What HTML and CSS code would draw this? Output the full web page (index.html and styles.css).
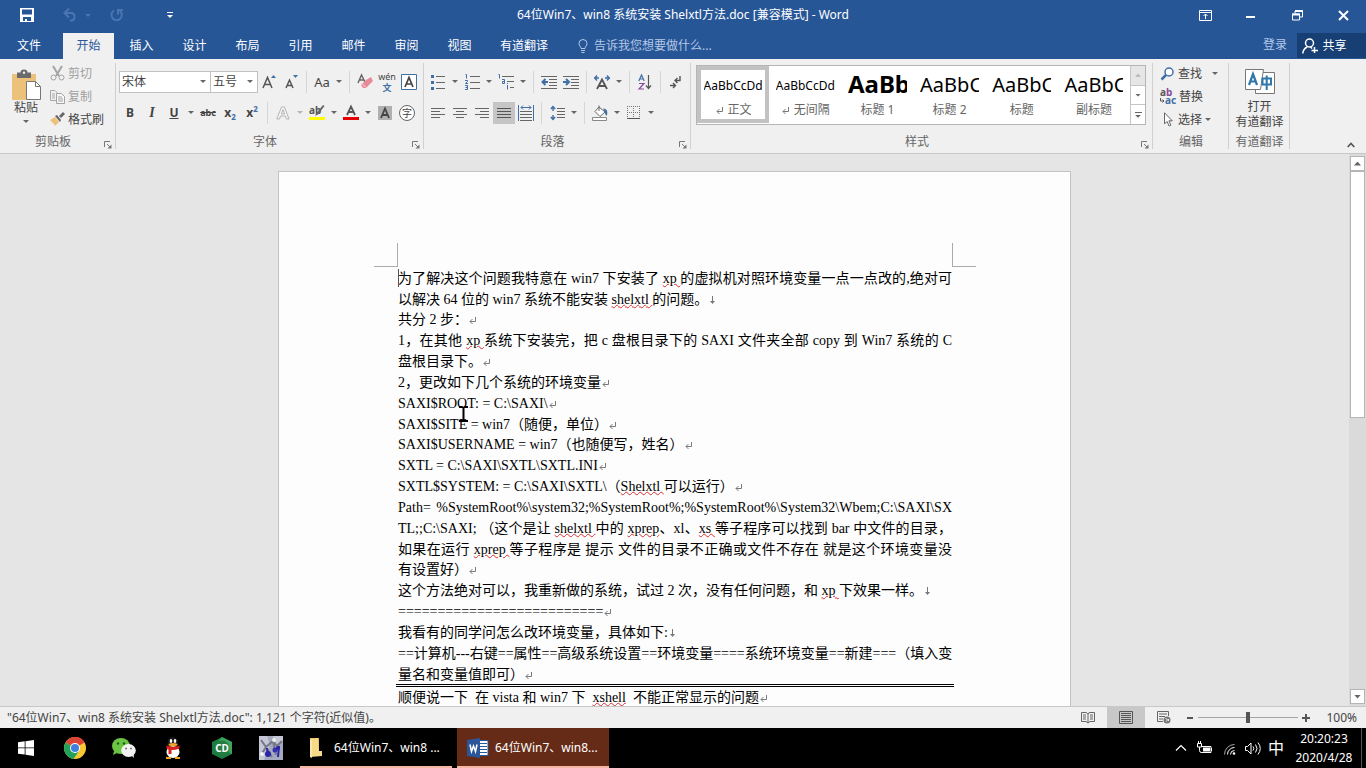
FILE: index.html
```html
<!DOCTYPE html>
<html lang="zh-CN">
<head>
<meta charset="utf-8">
<title>64位Win7、win8 系统安装 Shelxtl方法.doc [兼容模式] - Word</title>
<link rel="stylesheet" href="styles.css">
</head>
<body>
<svg class="defs" aria-hidden="true">
  <symbol id="enter" viewBox="0 0 9 14"><path d="M7.500 4v4.500H2M4.500 6l-2.500 2.500 2.500 2.500" fill="none" stroke="#7a7a7a"/></symbol>
  <symbol id="down" viewBox="0 0 9 14"><path d="M4.500 3v7" stroke="#777"/><path d="M2 8l2.500 3L7 8z" fill="#777"/></symbol>
  <symbol id="launch" viewBox="0 0 8 8"><path d="M.5 6V.500H6M3 3l3 3" fill="none" stroke="#777"/><path d="M7.500 3.500v4h-4z" fill="#777"/></symbol>
</svg>
<div class="app">
  <header class="titlebar">
    <div class="quick">
      <button class="qbtn" aria-label="保存"><svg width="14" height="14" viewBox="0 0 14 14"><path d="M0 0h14v14H0zM2 1.500v5h10v-5zM3 9v4h2v-2h2v2h4V9z" fill="#fff" fill-rule="evenodd"/></svg></button>
      <button class="qbtn dim" aria-label="撤消"><svg width="28" height="14" viewBox="0 0 28 14"><path d="M1.500 5h7.500a4 4 0 0 1 0 7.500H7M6 .500L1.500 5 6 9.500" fill="none" stroke="#4a74b4" stroke-width="2"/><path d="M22 6h6l-3 3z" fill="#4a74b4"/></svg></button>
      <button class="qbtn dim" aria-label="重复"><svg width="14" height="14" viewBox="0 0 14 14"><path d="M4 2.500a5.200 5.200 0 1 0 6 .500M8 6.500V2h5" fill="none" stroke="#4a74b4" stroke-width="2"/></svg></button>
      <button class="qbtn" aria-label="自定义"><svg width="6" height="8" viewBox="0 0 6 8"><path d="M0 4h6L3 7z" fill="#fff"/><path d="M0 1.500h6" stroke="#fff"/></svg></button>
    </div>
    <h1 class="title">64位Win7、win8 系统安装 Shelxtl方法.doc [兼容模式] - Word</h1>
    <div class="winbtns">
      <button aria-label="功能区显示选项"><svg width="13" height="11" viewBox="0 0 13 11"><path d="M.5.500h12v10H.5zM.5 2.500h12M6.500 9V4M4.500 6l2-2 2 2" fill="none" stroke="#fff"/></svg></button>
      <button aria-label="最小化"><svg width="10" height="11" viewBox="0 0 10 11"><path d="M0 7h9" stroke="#fff" stroke-width="2"/></svg></button>
      <button aria-label="还原"><svg width="11" height="11" viewBox="0 0 11 11"><path d="M.5 4h7v6h-7zM3 3.500V1h7.500v6H8" fill="none" stroke="#fff"/><path d="M0 4.500h8M3 1h8" stroke="#fff" stroke-width="2"/></svg></button>
      <button aria-label="关闭"><svg width="11" height="11" viewBox="0 0 11 11"><path d="M1 1l9 9M10 1l-9 9" stroke="#fff" stroke-width="2"/></svg></button>
    </div>
  </header>

  <nav class="tabs">
    <button class="tab file">文件</button>
    <button class="tab active">开始</button>
    <button class="tab">插入</button>
    <button class="tab">设计</button>
    <button class="tab">布局</button>
    <button class="tab">引用</button>
    <button class="tab">邮件</button>
    <button class="tab">审阅</button>
    <button class="tab">视图</button>
    <button class="tab wide">有道翻译</button>
    <label class="tell"><svg width="10" height="14" viewBox="0 0 10 14"><path d="M3 9.500C3 7.500 1 7 1 4.500a4 4 0 0 1 8 0C9 7 7 7.500 7 9.500zM3 11.500h4M3.500 13.500h3" fill="none" stroke="#b4c8e6"/></svg><input type="text" aria-label="告诉我" placeholder="告诉我您想要做什么..."></label>
    <button class="login">登录</button>
    <button class="share"><svg width="16" height="16" viewBox="0 0 16 16"><circle cx="7.500" cy="5" r="4" fill="none" stroke="#fff" stroke-width="1.500"/><path d="M.8 15.500c.3-3.500 2-5.500 4.500-6.500M8.500 9l1.500 1.500M12.500 9v6M9.500 12.500H16" fill="none" stroke="#fff" stroke-width="1.500"/></svg>共享</button>
  </nav>

  <div class="ribbon">
    <section class="group clip">
      <div class="body cols">
        <button class="big paste"><svg width="29" height="31" viewBox="0 0 29 31"><path d="M0 4h24v26H0z" fill="#ecc27a"/><path d="M5 2.500h3.500a3.500 3 0 0 1 7 0H19V8H5z" fill="#6b6b6b"/><circle cx="12" cy="2.800" r="1.200" fill="#eee"/><path d="M14.500 11.500h9l5 5v13h-14z" fill="#fff" stroke="#777"/><path d="M23.500 11.500v5h5" fill="none" stroke="#777"/></svg>粘贴<i class="caret"></i></button>
        <div class="stack">
          <button class="item off"><svg width="15" height="15" viewBox="0 0 15 15"><path d="M3 0l6 10M12 0L6 10" stroke="#a3a3a3" stroke-width="2"/><circle cx="3.500" cy="11.500" r="2.500" fill="none" stroke="#a3a3a3"/><circle cx="11.500" cy="11.500" r="2.500" fill="none" stroke="#a3a3a3"/></svg>剪切</button>
          <button class="item off"><svg width="15" height="15" viewBox="0 0 15 15"><path d="M6 11.500H.5V1.500H5l3 3M2 5h3M2 7h3M2 9h3" fill="none" stroke="#aaa"/><path d="M6.500 4.500h5l3 3v7h-8zM8 8h4M8 10h5M8 12h5" fill="#f8f8f8" stroke="#a3a3a3"/></svg>复制</button>
          <button class="item"><svg width="15" height="15" viewBox="0 0 15 15"><path d="M0 8l5-3 4 5-4 4c-1-3-3-3-5-6z" fill="#ecc27a"/><path d="M5 4l2-1 4 5-1 2zM9 4l4-4 2 2-4 4z" fill="#666"/></svg>格式刷</button>
        </div>
      </div>
      <footer class="cap"><span>剪贴板</span><button class="launch" aria-label="剪贴板设置"><svg width="8" height="8"><use href="#launch"/></svg></button></footer>
    </section>

    <section class="group font">
      <div class="body rows">
        <div class="row">
          <span class="combo name"><select aria-label="字体"><option>宋体</option></select><i class="caret"></i></span><span class="combo size"><select aria-label="字号"><option>五号</option></select><i class="caret"></i></span>
          <button class="ib" aria-label="增大字号"><svg width="14" height="16" viewBox="0 0 14 16"><path d="M1 14L5.500 3.500 10 14M2.500 10.500h6" fill="none" stroke="#555" stroke-width="1.500"/><path d="M9 4l2.500-3L14 4z" fill="#3f6fa5"/></svg></button>
          <button class="ib" aria-label="减小字号"><svg width="14" height="16" viewBox="0 0 14 16"><path d="M2 14L5.500 6 9 14M3 11.500h5" fill="none" stroke="#555" stroke-width="1.500"/><path d="M9 1h5l-2.500 3z" fill="#3f6fa5"/></svg></button>
          <i class="sep"></i>
          <button class="ib aa">Aa</button><button class="dd" aria-label="更改大小写选项"><i class="caret"></i></button>
          <i class="sep"></i>
          <button class="ib" aria-label="清除格式"><svg width="16" height="16" viewBox="0 0 16 16"><path d="M1 9L4.500 1 8 8M2 6h5" fill="none" stroke="#666" stroke-width="1.400"/><path d="M9 6l5-3 2 4-7 7H6l-2-3z" fill="#e8899a"/><path d="M5 9.500l4 4" stroke="#fbdce1"/></svg></button>
          <button class="ib wen"><span>wén</span><b>文</b></button>
          <button class="ib" aria-label="字符边框"><svg width="16" height="16" viewBox="0 0 16 16"><path d="M.5.500h15v15H.5z" fill="#fff" stroke="#3f6fa5"/><path d="M4 13L8 3.500 12 13M5.500 10h5" fill="none" stroke="#444" stroke-width="1.700"/></svg></button>
        </div>
        <div class="row">
          <button class="ib bold">B</button><button class="ib ital">I</button><button class="ib under">U</button><button class="dd" aria-label="下划线选项"><i class="caret"></i></button>
          <button class="ib strike">abc</button>
          <button class="ib bold">x<sub>2</sub></button><button class="ib bold">x<sup>2</sup></button>
          <i class="sep"></i>
          <button class="ib" aria-label="文本效果"><svg width="14" height="14" viewBox="0 0 14 14"><path d="M.8 13L5.500 1h3L13 13h-2.500l-1-3h-5l-1 3zM5.300 8h3.400L7 3.500z" fill="#f6f6f6" stroke="#b5b5b5"/></svg></button><button class="dd off" aria-label="文本效果选项"><i class="caret"></i></button>
          <button class="ib" aria-label="突出显示"><svg width="16" height="16" viewBox="0 0 16 16"><text x="0" y="9" font-size="10" font-weight="700" fill="#555">ab</text><path d="M15.500 1L9 9.500l-3 1.500 1.500-3L14 0z" fill="#666"/><path d="M0 12h16v3H0z" fill="#ff0"/></svg></button><button class="dd" aria-label="突出显示选项"><i class="caret"></i></button>
          <button class="ib" aria-label="字体颜色"><svg width="16" height="16" viewBox="0 0 16 16"><path d="M4 10L8 1.500 12 10M5.500 7h5" fill="none" stroke="#555" stroke-width="1.800"/><path d="M0 12h16v3H0z" fill="#e60000"/></svg></button><button class="dd" aria-label="字体颜色选项"><i class="caret"></i></button>
          <button class="ib" aria-label="字符底纹"><svg width="14" height="14" viewBox="0 0 14 14"><path d="M0 0h14v14H0z" fill="#b0b0b0"/><path d="M3 12L7 2.500 11 12M4.500 9h5" fill="none" stroke="#444" stroke-width="1.800"/></svg></button>
          <button class="ib"><span class="ring">字</span></button>
        </div>
      </div>
      <footer class="cap"><span>字体</span><button class="launch" aria-label="字体设置"><svg width="8" height="8"><use href="#launch"/></svg></button></footer>
    </section>

    <section class="group para">
      <div class="body rows">
        <div class="row">
          <button class="ib" aria-label="项目符号"><svg width="14" height="16" viewBox="0 0 14 16"><path d="M0 1h3v3H0zM0 7h3v3H0zM0 13h3v3H0z" fill="#3f6fa5"/><path d="M5 2.500h9M5 8.500h9M5 14.500h9" stroke="#666"/></svg></button><button class="dd" aria-label="项目符号选项"><i class="caret"></i></button>
          <button class="ib" aria-label="编号"><svg width="15" height="16" viewBox="0 0 15 16"><path d="M.5.500h1v4M0 6.500h2.500v1L.5 9.500H3M0 11.500h2.500v4H0M.5 13.500h2" fill="none" stroke="#3f6fa5"/><path d="M5 2.500h10M5 8.500h10M5 14.500h10" stroke="#666"/></svg></button><button class="dd" aria-label="编号选项"><i class="caret"></i></button>
          <button class="ib" aria-label="多级列表"><svg width="16" height="16" viewBox="0 0 16 16"><path d="M.5.500h1v4M4 5.500h2.500v4H4.500v-2h2M9.500 11v4.500M9.500 9v1" fill="none" stroke="#3f6fa5"/><path d="M4 2.500h12M9 7.500h7M12 13.500h4" stroke="#666"/></svg></button><button class="dd" aria-label="多级列表选项"><i class="caret"></i></button>
          <i class="sep"></i>
          <button class="ib" aria-label="减少缩进量"><svg width="16" height="14" viewBox="0 0 16 14"><path d="M0 1.500h16M8 4.500h8M8 7.500h8M8 10.500h8M0 13.500h16" stroke="#666"/><path d="M7 7H2M4.500 4L1.500 7l3 3" fill="none" stroke="#3f6fa5" stroke-width="2"/></svg></button>
          <button class="ib" aria-label="增加缩进量"><svg width="16" height="14" viewBox="0 0 16 14"><path d="M0 1.500h16M8 4.500h8M8 7.500h8M8 10.500h8M0 13.500h16" stroke="#666"/><path d="M0 7h5M3 4l3 3-3 3" fill="none" stroke="#3f6fa5" stroke-width="2"/></svg></button>
          <i class="sep"></i>
          <button class="ib" aria-label="中文版式"><svg width="16" height="14" viewBox="0 0 16 14"><path d="M3 14L8 4.500 13 14M5 11h6" fill="none" stroke="#555" stroke-width="1.800"/><path d="M0 3h5M11 3h5M3 .500L.8 3 3 5.500M13 .500L15.200 3 13 5.500" fill="none" stroke="#3f6fa5" stroke-width="1.500"/></svg></button><button class="dd" aria-label="中文版式选项"><i class="caret"></i></button>
          <i class="sep"></i>
          <button class="ib" aria-label="排序"><svg width="14" height="16" viewBox="0 0 14 16"><path d="M.8 7L3.500 1 6.200 7M1.500 5h4" fill="none" stroke="#3f6fa5" stroke-width="1.200"/><path d="M1 9.500h5l-5 5.500h5" fill="none" stroke="#8a4b9c" stroke-width="1.200"/><path d="M10.500 1v13M8 11.500l2.500 3 2.500-3" fill="none" stroke="#555" stroke-width="1.200"/></svg></button>
          <i class="sep"></i>
          <button class="ib" aria-label="显示编辑标记"><svg width="12" height="14" viewBox="0 0 12 14"><path d="M10 1v4.500H5M7.500 3L5 5.500 7.500 8M0 10.500h5M3 8l2.500 2.500L3 13" fill="none" stroke="#555" stroke-width="1.400"/></svg></button>
        </div>
        <div class="row">
          <button class="ib" aria-label="左对齐"><svg width="14" height="12" viewBox="0 0 14 12"><path d="M0 1.500h14M0 4.500h9M0 7.500h14M0 10.500h9" stroke="#666"/></svg></button>
          <button class="ib" aria-label="居中"><svg width="14" height="12" viewBox="0 0 14 12"><path d="M0 1.500h14M3 4.500h8M0 7.500h14M3 10.500h8" stroke="#666"/></svg></button>
          <button class="ib" aria-label="右对齐"><svg width="14" height="12" viewBox="0 0 14 12"><path d="M0 1.500h14M5 4.500h9M0 7.500h14M5 10.500h9" stroke="#666"/></svg></button>
          <button class="ib on" aria-label="两端对齐"><svg width="14" height="12" viewBox="0 0 14 12"><path d="M0 1.500h14M0 4.500h14M0 7.500h14M0 10.500h14" stroke="#555"/></svg></button>
          <button class="ib" aria-label="分散对齐"><svg width="16" height="16" viewBox="0 0 16 16"><path d="M.5 0v16M15.500 0v16M3 2.500h10M5 .500l-2 2 2 2M11 .500l2 2-2 2" fill="none" stroke="#3f6fa5"/><path d="M2 6.500h12M2 9.500h12M2 12.500h12M2 15.500h12" stroke="#666"/></svg></button>
          <i class="sep"></i>
          <button class="ib" aria-label="行距"><svg width="15" height="16" viewBox="0 0 15 16"><path d="M3 1v5M3 10v5M.8 4L3 1.500 5.200 4M.8 12L3 14.500 5.200 12" fill="none" stroke="#3f6fa5" stroke-width="1.400"/><path d="M7 3.500h8M7 6.500h8M7 9.500h8M7 12.500h8" stroke="#666"/></svg></button><button class="dd" aria-label="行距选项"><i class="caret"></i></button>
          <i class="sep"></i>
          <button class="ib" aria-label="底纹"><svg width="16" height="16" viewBox="0 0 16 16"><path d="M7 2l6 5-5 4.500L3 6.500zM7 6V.500" fill="#fff" stroke="#666"/><path d="M11 3.500c4 0 5 3 4 7-2 0-2-2-2-3.500z" fill="#3f6fa5"/><path d="M.5 12.500h14v3H.5z" fill="#fff" stroke="#888"/></svg></button><button class="dd" aria-label="底纹选项"><i class="caret"></i></button>
          <button class="ib" aria-label="边框"><svg width="14" height="14" viewBox="0 0 14 14"><path d="M0 .500h14M0 6.500h14M.5 0v14M6.500 0v14M12.500 0v14" stroke="#777" stroke-dasharray="1 1"/><path d="M0 12.500h13" stroke="#555"/></svg></button><button class="dd" aria-label="边框选项"><i class="caret"></i></button>
        </div>
      </div>
      <footer class="cap"><span>段落</span><button class="launch" aria-label="段落设置"><svg width="8" height="8"><use href="#launch"/></svg></button></footer>
    </section>

    <section class="group styles">
      <div class="body">
        <div class="gallery">
          <button class="style sel"><span class="demo">AaBbCcDd</span><span class="sname"><svg width="9" height="14"><use href="#enter"/></svg> 正文</span></button>
          <button class="style"><span class="demo">AaBbCcDd</span><span class="sname"><svg width="9" height="14"><use href="#enter"/></svg> 无间隔</span></button>
          <button class="style"><span class="demo h1">AaBb</span><span class="sname">标题 1</span></button>
          <button class="style"><span class="demo h2">AaBbC</span><span class="sname">标题 2</span></button>
          <button class="style"><span class="demo h2">AaBbC</span><span class="sname">标题</span></button>
          <button class="style"><span class="demo h2">AaBbC</span><span class="sname">副标题</span></button>
          <div class="gscroll">
            <button class="off" aria-label="上一行"><i class="caret up"></i></button>
            <button aria-label="下一行"><i class="caret"></i></button>
            <button class="more" aria-label="其他"><i class="caret"></i></button>
          </div>
        </div>
      </div>
      <footer class="cap"><span>样式</span><button class="launch" aria-label="样式设置"><svg width="8" height="8"><use href="#launch"/></svg></button></footer>
    </section>

    <section class="group edit">
      <div class="body stack">
        <button class="item"><svg width="15" height="14" viewBox="0 0 15 14"><circle cx="9" cy="5" r="4" fill="#fff" stroke="#3f6fa5" stroke-width="1.500"/><path d="M6 8l-4.500 4.500" stroke="#3f6fa5" stroke-width="2.500"/></svg>查找<i class="caret far"></i></button>
        <button class="item"><svg width="16" height="17" viewBox="0 0 16 17"><text x="0" y="8" font-size="10" font-weight="700" fill="#555">a<tspan fill="#8a4b9c">b</tspan></text><text x="5" y="16" font-size="10" font-weight="700" fill="#3f6fa5">ac</text><path d="M.5 10v3H4M2.500 11.500L4 13l-1.500 1.500" fill="none" stroke="#555"/></svg>替换</button>
        <button class="item"><svg width="15" height="15" viewBox="0 0 15 15"><path d="M4.500.8v11l2.600-2.300 2 4.500 1.800-.8-2-4.400h3.400z" fill="#fff" stroke="#666"/></svg>选择<i class="caret near"></i></button>
      </div>
      <footer class="cap"><span>编辑</span></footer>
    </section>

    <section class="group dict">
      <div class="body">
        <button class="big"><svg width="30" height="25" viewBox="0 0 30 25"><path d="M11 3.500h18.500v21H10.500V20" fill="#fff" stroke="#777"/><path d="M.5.500h18l-3 20H.5z" fill="#fff" stroke="#777"/><path d="M4 16L8 5l4 11M5.500 12.500h5" fill="none" stroke="#2f77a8" stroke-width="2.200"/><path d="M17.500 9.500h8.500v6h-8.500zM21.700 6.500V21" fill="none" stroke="#2f77a8" stroke-width="2"/></svg>打开<br>有道翻译</button>
      </div>
      <footer class="cap"><span>有道翻译</span></footer>
    </section>
    <button class="collapse" aria-label="折叠功能区"><svg width="8" height="6" viewBox="0 0 8 6"><path d="M.7 5L4 1.500 7.300 5" fill="none" stroke="#555" stroke-width="1.700"/></svg></button>
  </div>

  <main class="work">
    <div class="canvas">
      <article class="page">
        <div class="marks"><i class="ml"></i><i class="mr"></i></div>
        <div class="text">
          <i class="cursor"></i>
          <p class="full">为了解决这个问题我特意在 win7 下安装了 <u>xp </u>的虚拟机对照环境变量一点一点改的,绝对可</p>
          <p>以解决 64 位的 win7 系统不能安装 <u>shelxtl </u>的问题。<svg class="mk"><use href="#down"/></svg></p>
          <p>共分 2 步：<svg class="mk"><use href="#enter"/></svg></p>
          <p class="full">1，在其他 <u>xp </u>系统下安装完，把 c 盘根目录下的 SAXI 文件夹全部 copy 到 Win7 系统的 C</p>
          <p>盘根目录下。<svg class="mk"><use href="#enter"/></svg></p>
          <p>2，更改如下几个系统的环境变量<svg class="mk"><use href="#enter"/></svg></p>
          <p>SAXI$ROOT: = C:\SAXI\<svg class="mk"><use href="#enter"/></svg></p>
          <p>SAXI$SITE = win7（随便，单位）<svg class="mk"><use href="#enter"/></svg></p>
          <p>SAXI$USERNAME = win7（也随便写，姓名）<svg class="mk"><use href="#enter"/></svg></p>
          <p>SXTL = C:\SAXI\SXTL\SXTL.INI<svg class="mk"><use href="#enter"/></svg></p>
          <p>SXTL$SYSTEM: = C:\SAXI\SXTL\（<u>Shelxtl </u>可以运行）<svg class="mk"><use href="#enter"/></svg></p>
          <p class="full">Path= %SystemRoot%\system32;%SystemRoot%;%SystemRoot%\System32\Wbem;C:\SAXI\SX</p>
          <p class="full">TL;;C:\SAXI; （这个是让 <u>shelxtl </u>中的 <u>xprep</u>、xl、<u>xs </u>等子程序可以找到 bar 中文件的目录，</p>
          <p class="full">如果在运行 <u>xprep </u>等子程序是 提示 文件的目录不正确或文件不存在 就是这个环境变量没</p>
          <p>有设置好）<svg class="mk"><use href="#enter"/></svg></p>
          <p>这个方法绝对可以，我重新做的系统，试过 2 次，没有任何问题，和 <u>xp </u>下效果一样。<svg class="mk"><use href="#down"/></svg></p>
          <p>==========================<svg class="mk"><use href="#enter"/></svg></p>
          <p>我看有的同学问怎么改环境变量，具体如下:<svg class="mk"><use href="#down"/></svg></p>
          <p class="full">==计算机---右键==属性==高级系统设置==环境变量====系统环境变量==新建===（填入变</p>
          <p>量名和变量值即可）<svg class="mk"><use href="#enter"/></svg></p>
          <hr class="rule">
          <p>顺便说一下&nbsp; 在 vista 和 win7 下&nbsp; <u>xshell</u>&nbsp; 不能正常显示的问题<svg class="mk"><use href="#enter"/></svg></p>
          <svg class="ibeam" width="9" height="16" viewBox="0 0 9 16"><path d="M0 1h3l1.500 1L6 1h3M0 15h3l1.500-1L6 15h3M4.500 2v12" fill="none" stroke="#000" stroke-width="2"/></svg>
        </div>
      </article>
    </div>
    <div class="vscroll">
      <button aria-label="向上滚动"><i class="caret up"></i></button>
      <div class="thumb"></div>
      <button class="end" aria-label="向下滚动"><i class="caret"></i></button>
    </div>
  </main>

  <div class="status">
    <span class="info">"64位Win7、win8 系统安装 Shelxtl方法.doc": 1,121 个字符(近似值)。</span>
    <button class="view" aria-label="阅读视图"><svg width="14" height="13" viewBox="0 0 14 13"><path d="M6.500 2.500L5 1.500H.5v9H5l2 1.500 2-1.500h4.500v-9H9L7 2.500zM7 2v10M2 4h3M2 6h3M2 8h3M9 4h3M9 6h3M9 8h3" fill="none" stroke="#666"/></svg></button>
    <button class="view on" aria-label="页面视图"><svg width="14" height="13" viewBox="0 0 14 13"><path d="M.5.500h13v12H.5zM2 2.500h10M2 4.500h10M2 6.500h10M2 8.500h10M2 10.500h10" fill="none" stroke="#555"/></svg></button>
    <button class="view" aria-label="Web 版式视图"><svg width="14" height="13" viewBox="0 0 14 13"><path d="M6 10.500H.5V.500h11V5M2 3h8M2 5.500h6M2 8h4" fill="none" stroke="#666"/><circle cx="10" cy="9" r="3.500" fill="#777"/><path d="M8.500 7.500l2 1-1 2M11.500 8v2" fill="none" stroke="#eee"/></svg></button>
    <button class="zb" aria-label="缩小"><svg width="8" height="8" viewBox="0 0 8 8"><path d="M1 4h6" stroke="#555" stroke-width="2"/></svg></button>
    <input class="zoom" type="range" min="0" max="100" value="50" aria-label="缩放">
    <button class="zb" aria-label="放大"><svg width="8" height="8" viewBox="0 0 8 8"><path d="M0 4h8M4 0v8" stroke="#555" stroke-width="2"/></svg></button>
    <button class="pct">100%</button>
  </div>

  <div class="taskbar">
    <button class="tk" aria-label="开始菜单"><svg width="16" height="16" viewBox="0 0 16 16"><path d="M0 2.300l6.700-1v6.200H0zM7.500 1.200L16 0v7.500H7.500zM0 8.300h6.700v6.300L0 13.700zM7.500 8.300H16V16l-8.500-1.200z" fill="#fff"/></svg></button>
    <button class="tk" aria-label="Chrome"><svg width="22" height="22" viewBox="0 0 22 22"><circle cx="11" cy="11" r="11" fill="#f8c933"/><path d="M11 11L1.500 5.500a11 11 0 0 1 19 0z" fill="#dc4437"/><path d="M11 11L1.500 5.500a11 11 0 0 0 8 16.400L15 14z" fill="#22a15c"/><path d="M11 6h9.800l-.3-.5a11 11 0 0 0-9.500-5.500z" fill="#dc4437"/><circle cx="11" cy="11" r="5" fill="#fff"/><circle cx="11" cy="11" r="4" fill="#3f7fe0"/></svg></button>
    <button class="tk" aria-label="微信"><svg width="24" height="20" viewBox="0 0 24 20"><path d="M2 13l-1 4 4-2z" fill="#6cc644"/><ellipse cx="9" cy="8" rx="9" ry="8" fill="#6cc644"/><circle cx="6" cy="5.500" r="1.200" fill="#1c5a15"/><circle cx="12" cy="5.500" r="1.200" fill="#1c5a15"/><ellipse cx="16.500" cy="12.500" rx="7.300" ry="6.500" fill="#f3f3f3"/><path d="M19 17l3 3-.5-4z" fill="#f3f3f3"/><circle cx="14" cy="10.500" r="1" fill="#777"/><circle cx="19" cy="10.500" r="1" fill="#777"/></svg></button>
    <button class="tk" aria-label="QQ"><svg width="16" height="22" viewBox="0 0 16 22"><ellipse cx="8" cy="7" rx="5.500" ry="7" fill="#191919"/><ellipse cx="8" cy="15" rx="7" ry="6" fill="#191919"/><ellipse cx="8" cy="15" rx="6.500" ry="6" fill="#fff"/><ellipse cx="6" cy="4" rx="1.300" ry="1.900" fill="#fff"/><ellipse cx="10" cy="4" rx="1.300" ry="1.900" fill="#fff"/><ellipse cx="8" cy="7.500" rx="4.500" ry="1.600" fill="#f5a623"/><path d="M1.500 8.500q6.500 2.500 13 0v3q-4 1.500-8 1.500v4h-3v-4.500l-2-1z" fill="#d9201c"/><path d="M1 20h5v2H1zM10 20h5v2h-5z" fill="#f5a623"/></svg></button>
    <button class="tk" aria-label="CD"><svg width="20" height="22" viewBox="0 0 20 22"><path d="M10 0l10 5v12l-10 5L0 17V5z" fill="#1c7b3e"/><path d="M10 0l10 5v12L3 8z" fill="#3ca35c"/><circle cx="10" cy="11" r="7.500" fill="#237c43"/><text x="10" y="15" text-anchor="middle" font-size="10" font-weight="700" fill="#fff">CD</text></svg></button>
    <button class="tk" aria-label="分子"><svg width="24" height="24" viewBox="0 0 24 24"><path d="M0 0h24v24H0z" fill="#a5a9c0"/><path d="M0 0h8l3 9-6 15H0zM14 0h10v5l-8 4z" fill="#c5c7d5"/><path d="M2 4l5 7-5 8M7 11l7-6 4 5 5-5M14 5l3 14M8 13l5 8" fill="none" stroke="#747887" stroke-width="2"/><circle cx="9" cy="18" r="3" fill="#2a25a8"/><circle cx="16" cy="14" r="2.500" fill="#3430b0"/><circle cx="19" cy="12" r="2" fill="#2a25a8"/><path d="M8 12l1 8M20 10l-1 11" stroke="#2a25a8" stroke-width="2"/><circle cx="3" cy="18" r="2" fill="#f5f5f5"/><circle cx="15" cy="4" r="2" fill="#eee"/></svg></button>
    <button class="task"><svg width="20" height="20" viewBox="0 0 20 20"><path d="M4 0h9v18H4z" fill="#e3b64d"/><path d="M4 1l8-1 1 13h3v5l-12 1z" fill="#f7d98a"/><path d="M4 1l2 2v17l-2-1z" fill="#fbe6ad"/></svg>64位Win7、win8 ...</button>
    <button class="task cur"><svg width="22" height="20" viewBox="0 0 22 20"><path d="M11 2.500h10v15H11z" fill="#fff" stroke="#2b579a"/><path d="M13 5.500h7M13 8.500h7M13 11.500h7M13 14.500h7" stroke="#2b579a"/><path d="M0 2l13-2v20L0 18z" fill="#2b579a"/><path d="M3 6.500l1.500 7L6.500 8l2 5.500 1.500-7" fill="none" stroke="#fff" stroke-width="1.500"/></svg>64位Win7、win8...</button>
    <div class="tray">
      <button aria-label="显示隐藏的图标"><svg width="12" height="8" viewBox="0 0 12 8"><path d="M1 6.500l5-5 5 5" fill="none" stroke="#fff" stroke-width="1.200"/></svg></button>
      <button aria-label="电池"><svg width="16" height="14" viewBox="0 0 16 14"><path d="M5 5.500h9v6H4M14.500 7v3M2.500 6v3.500a2 2 0 0 0 2 2M.5 2.500h4V6h-4zM1.500 0v2M3.500 0v2" fill="none" stroke="#fff"/><path d="M6 6.500h7v4H6z" fill="#fff"/></svg></button>
      <button aria-label="网络"><svg width="13" height="13" viewBox="0 0 13 13"><circle cx="11" cy="11.500" r="1.300" fill="#fff"/><path d="M7.500 12.500a4 4 0 0 1 4-4M4.500 12.500a7 7 0 0 1 7-7" fill="none" stroke="#fff"/><path d="M1.500 12.500a10 10 0 0 1 10-10" fill="none" stroke="#aaa"/></svg></button>
      <button aria-label="音量"><svg width="17" height="13" viewBox="0 0 17 13"><path d="M.5 4.500h2L6 1v11L2.500 8.500h-2zM8 4.500q1.500 2 0 4M10.500 2.500q3 4 0 8M13 .500q4.500 6 0 12" fill="none" stroke="#fff"/></svg></button>
      <button class="ime">中</button>
      <button class="clock">20:20:23<br>2020/4/28</button>
      <i class="peek"></i>
    </div>
  </div>
</div>
</body>
</html>
```
FILE: styles.css
```css
* { box-sizing: border-box; }
body {
  margin: 0;
  font: 12px/16px "Noto Sans", "Noto Sans CJK SC", sans-serif;
  color: #444;
}
button, input, select { font: inherit; color: inherit; }
button {
  margin: 0;
  padding: 0;
  border: 0;
  background: none;
  display: flex;
  align-items: center;
  justify-content: center;
}
svg { flex: none; display: block; overflow: visible; }
.defs { position: absolute; width: 0; height: 0; overflow: hidden; }
.app { display: flex; flex-direction: column; height: 100vh; overflow: hidden; }

.caret {
  flex: none;
  width: 6px;
  height: 3px;
  background: #666;
  clip-path: polygon(0 0, 100% 0, 50% 100%);
}
.caret.up { clip-path: polygon(50% 0, 100% 100%, 0 100%); }
.off .caret { background: #b5b5b5; }

/* title bar */
.titlebar {
  display: grid;
  grid-template-columns: 1fr auto 1fr;
  align-items: center;
  height: 30px;
  background: #275697;
  color: #fff;
}
.quick { display: flex; padding-left: 20px; gap: 43px; }
.quick .dim { margin: 0 -24px 0 -14px; }
.quick .dim + .dim { margin: 0; }
.title { margin: 0; font-size: 12px; font-weight: 400; line-height: 16px; white-space: nowrap; }
.winbtns { display: flex; justify-content: flex-end; }
.winbtns button { width: 46px; height: 30px; }

/* tabs */
.tabs { display: flex; height: 29px; background: #275697; color: #fff; }
.tab { min-width: 51px; margin: 3px 2px 0 0; }
.tab.file { width: 58px; margin-right: 5px; }
.tab.active { background: #f0f0f0; color: #2b579a; }
.tab.wide { width: 74px; }
.tell { display: flex; align-items: center; gap: 6px; flex: 1; margin: 3px 0 0 15px; }
.tell input { flex: 1; min-width: 0; padding: 0; border: 0; background: none; outline: 0; }
.tell input::placeholder { color: #b4c8e6; opacity: 1; }
.login { width: 44px; color: #b4c8e6; }
.share { width: 69px; height: 25px; margin-top: 3px; gap: 4px; background: #173f73; padding-right: 14px; }

/* ribbon */
.ribbon {
  display: flex;
  height: 95px;
  padding-top: 3px;
  background: #f0f0f0;
  border-bottom: 1px solid #c8c8c8;
}
.group { display: flex; flex-direction: column; flex: none; position: relative; }
.group::after {
  content: "";
  position: absolute;
  right: 0;
  top: 1px;
  bottom: 4px;
  width: 1px;
  background: #d0d0d0;
}
.body { height: 69px; }
.cap { display: flex; align-items: center; height: 22px; color: #666; padding-right: 10px; }
.cap span { flex: 1; text-align: center; }
.cap .launch { width: 8px; margin: 6px -6px 0 -2px; }
.cols { display: flex; }
.stack { display: flex; flex-direction: column; }
.item { height: 23px; gap: 3px; justify-content: flex-start; white-space: nowrap; }
.item.off { color: #a0a0a0; }
.big { flex-direction: column; line-height: 15px; width: 100%; }
.clip { width: 116px; }
.paste { width: 36px; margin: 0 6px 0 8px; }
.paste svg { margin-bottom: -1px; }
.paste .caret { margin-top: 5px; }
.rows { padding: 4px 0 0 3px; }
.row { display: flex; align-items: center; height: 31px; }
.font { width: 308px; }
.combo { display: flex; align-items: center; height: 22px; border: 1px solid #c0c0c0; background: #fff; }
.combo + .combo { border-left: 0; }
.combo select {
  flex: 1;
  min-width: 0;
  height: 20px;
  padding: 0 2px;
  border: 0;
  background: none;
  appearance: none;
}
.combo .caret { margin-right: 4px; }
.name { width: 92px; }
.size { width: 47px; }
.ib { flex: none; width: 22px; height: 22px; }
.ib.on { background: #c5c5c5; }
.dd { flex: none; width: 12px; height: 22px; }
.sep { flex: none; width: 1px; height: 22px; margin: 0 4px; background: #d6d6d6; }
.aa { font-size: 13px; }
.wen { flex-direction: column; font-size: 9px; line-height: 11px; }
.wen b { color: #3f6fa5; font-size: 9px; line-height: 11px; }
.bold { font-weight: 700; font-size: 12px; }
.bold sub, .bold sup { font-size: 8px; line-height: 14px; color: #3f6fa5; }
.bold sub { align-self: flex-end; }
.bold sup { align-self: flex-start; }
.ital { font: italic 700 14px "Liberation Serif", serif; }
.under { font-weight: 700; font-size: 12px; text-decoration: underline; }
.strike { font-size: 9px; font-weight: 700; text-decoration: line-through; }
.ring {
  width: 16px;
  height: 16px;
  border: 1px solid #666;
  border-radius: 50%;
  background: #fff;
  font-size: 10px;
  line-height: 14px;
}
.para { width: 267px; }
.styles { width: 462px; }
.styles .body { padding: 3px 7px 0 5px; }
.gallery { display: flex; height: 60px; border: 1px solid #b5b5b5; background: #fff; }
.style {
  flex: 1;
  min-width: 0;
  height: 57px;
  border: 4px solid transparent;
  flex-direction: column;
  justify-content: flex-start;
}
.style.sel { border-color: #c2c2c2; }
.demo { width: 59px; height: 32px; line-height: 32px; overflow: hidden; color: #000; white-space: nowrap; text-align: left; }
.demo.h1 { font-size: 24px; font-weight: 700; line-height: 28px; }
.demo.h2 { font-size: 20px; line-height: 30px; }
.sname { display: flex; align-items: center; gap: 4px; color: #666; }
.gscroll { display: flex; flex-direction: column; width: 15px; }
.gscroll button { flex: 1; border-left: 1px solid #c5c5c5; border-bottom: 1px solid #c5c5c5; }
.gscroll .off { background: #e6e6e6; }
.gscroll .more { flex-direction: column; gap: 2px; border-bottom: 0; }
.gscroll .more::before { content: ""; width: 7px; height: 1px; background: #666; }
.edit { width: 76px; }
.edit .stack { padding-left: 7px; }
.edit .cap, .dict .cap { padding: 0; }
.far { margin-left: 7px; }
.dict { width: 61px; }
.dict .big { margin-top: 7px; line-height: 15px; }
.dict .big svg { margin-bottom: 5px; }
.collapse { align-self: flex-end; margin: 0 11px 5px auto; }

/* document */
.work { display: flex; flex: 1; min-height: 0; background: #e5e5e5; }
.canvas { flex: 1; min-width: 0; overflow: hidden; padding-top: 17px; }
.page {
  width: 793px;
  min-height: 1122px;
  margin: 0 auto;
  padding: 71px 118px 0 119px;
  border: 1px solid #c3c3c3;
  background: #fdfdfd;
}
.marks { display: flex; justify-content: space-between; margin: 0 -24px 1px; }
.marks i { width: 24px; height: 24px; border-bottom: 1px solid #aaa; }
.ml { border-right: 1px solid #aaa; }
.mr { border-left: 1px solid #aaa; }
.text {
  position: relative;
  color: #000;
  font: 14px/21px "Liberation Serif", "Noto Sans CJK SC", serif;
}
.text p { margin: 0; height: 21px; white-space: nowrap; }
.text p:nth-of-type(6n+2) { height: 20px; }
.text .full { text-align-last: justify; }
.text u { text-decoration: underline wavy #d83030 1px; text-underline-offset: 0; }
.mk { display: inline-block; width: 9px; height: 14px; vertical-align: -3px; }
.rule { height: 3px; margin: 0 -2px; border: 0; border-top: 3px double #000; }
.cursor { position: absolute; left: 0; top: 1px; width: 1px; height: 18px; background: #555; }
.ibeam { position: absolute; left: 61px; top: 138px; }
.vscroll { display: flex; flex-direction: column; width: 17px; padding: 2px 1px; background: #dadada; }
.vscroll button { height: 15px; border: 1px solid #b5b5b5; background: #fff; }
.vscroll .caret { width: 7px; height: 4px; }
.thumb { height: 45%; border: 1px solid #b5b5b5; background: #fff; }
.vscroll .end { margin-top: auto; }

/* status bar */
.status { display: flex; align-items: center; height: 22px; padding: 0 9px 0 7px; background: #f0f0f0; border-top: 1px solid #c8c8c8; }
.info { flex: 1; white-space: nowrap; }
.view { width: 38px; height: 21px; }
.view.on { background: #c8c8c8; }
.zb { width: 14px; height: 20px; }
.zoom { width: 100px; height: 14px; margin: 0 1px; appearance: none; background: linear-gradient(#a5a5a5, #a5a5a5) center / 100% 1px no-repeat; }
.zoom::-webkit-slider-thumb { appearance: none; width: 4px; height: 11px; background: #555; }
.pct { width: 44px; justify-content: flex-end; }

/* task bar */
.taskbar { display: flex; height: 40px; padding-left: 1px; background: #000; color: #fff; }
.tk { width: 49px; flex: none; }
.task { width: 152px; gap: 8px; justify-content: flex-start; padding: 2px 0 0 6px; margin-left: 5px; border-bottom: 2px solid #f5b7a2; white-space: nowrap; }
.task.cur { background: #652b16; padding-left: 10px; gap: 6px; }
.tray { display: flex; margin-left: auto; }
.tray button { width: 24px; }
.tray .ime { font-size: 16px; width: 22px; }
.tray .clock { width: 74px; line-height: 19px; }
.peek { width: 1px; margin-right: 4px; background: #555; }
```
